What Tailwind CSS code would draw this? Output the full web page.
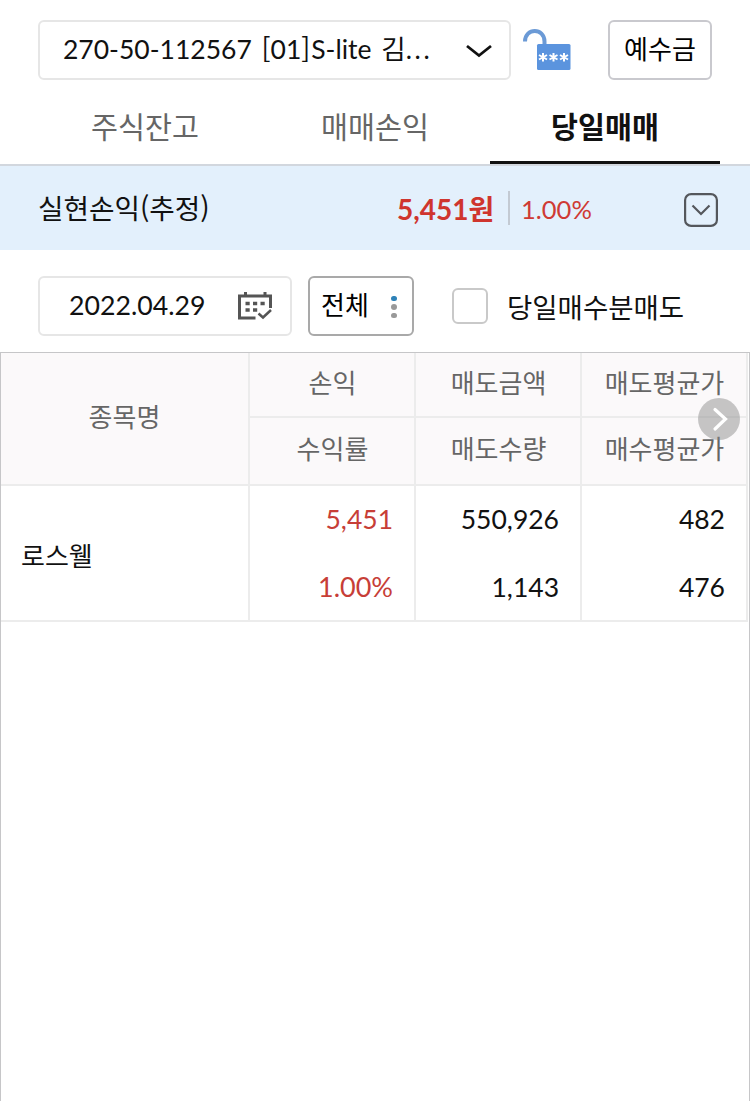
<!DOCTYPE html>
<html lang="ko">
<head>
<meta charset="utf-8">
<title>당일매매</title>
<script src="https://cdn.jsdelivr.net/npm/@tailwindcss/browser@4"></script>
</head>
<body class="flex h-[1101px] w-[750px] flex-col overflow-hidden bg-white font-['Lato','Noto_Sans_CJK_KR',sans-serif] text-[26px] leading-[40px] text-[#111] whitespace-nowrap">
  <header class="flex pt-5 pl-[38px] h-[94px]">
    <div class="flex h-15 w-[473px] items-center rounded-md border-2 border-[#e6e6e6] pl-[23px] pr-[16px]">
      <span class="flex-1 pb-[3px] text-[26.5px]">270-50-112567 <span class="ml-[3px] font-['Noto_Sans_CJK_KR']">[</span>01<span class="mr-px font-['Noto_Sans_CJK_KR']">]</span>S-lite <span class="ml-[3px]">김</span><span class="tracking-[2.6px]">...</span></span>
      <svg class="h-4 w-7" viewBox="0 0 28 16" fill="none" stroke="#111" stroke-width="2.8"><path d="M2 4 14 13.500 26 4"/></svg>
    </div>
    <svg class="ml-3 mt-2 h-[44px] w-[50px]" viewBox="0 0 50 44">
      <path d="M2 13.500C2 -.5 21.500 -.5 21.500 13.500V18" fill="none" stroke="#6b9ad6" stroke-width="4"/>
      <rect x="14" y="16" width="33.500" height="26" rx="1.500" fill="#5b94de"/>
      <g stroke="#fff" stroke-width="2"><path id="star" d="M20 25v8.500M16 27l8 4.500M24 27l-8 4.500"/><use href="#star" x="10.500"/><use href="#star" x="21"/></g>
    </svg>
    <div class="ml-[35px] flex h-15 w-[104px] items-center justify-center rounded-md border-2 border-[#c9c9ce] pb-0.5 text-black">예수금</div>
  </header>

  <nav class="grid h-[72px] grid-cols-3 border-b-2 border-[#d2d7de] px-[30px] text-center text-[29.3px] text-[#666]">
    <div class="pt-[13px]">주식잔고</div>
    <div class="pt-[13px]">매매손익</div>
    <div class="border-b-[3px] border-[#111] pt-[13px] font-bold text-[#111]">당일매매</div>
  </nav>

  <section class="flex h-[84px] items-center bg-[#e3f0fc] pl-[38px] pr-8">
    <span class="w-[359px] text-[27.700px]">실현손익<span class="font-['Noto_Sans_CJK_KR']">(</span>추정<span class="font-['Noto_Sans_CJK_KR']">)</span></span>
    <span class="w-[111px] pt-px text-[28px] font-bold text-[#cf352e]">5,451원</span>
    <span class="mr-[11px] h-[34px] w-0.5 bg-[#c3cad3]"></span>
    <span class="flex-1 pt-0.5 text-[25.500px] text-[#cf3a34]">1.00%</span>
    <svg class="mt-1 h-[34px] w-[34px]" viewBox="0 0 34 34" fill="none" stroke="#54575c" stroke-width="2.200"><rect x="1.100" y="1.100" width="31.800" height="31.800" rx="6"/><path d="m8.500 12.500 8.500 8.500 8.500-8.500"/></svg>
  </section>

  <section class="flex h-[102px] items-center pl-[38px] pt-[10px] pb-0">
    <div class="flex h-15 w-[254px] items-center rounded-md border-2 border-[#e6e6e6] pl-[29px] pr-[18px]">
      <span class="flex-1 pb-0.5 text-[26.700px]">2022.04.29</span>
      <svg class="h-[28px] w-[34px]" viewBox="0 0 34 28" fill="none" stroke="#555" stroke-width="3"><path d="M17.500 26H1.500V4h31v12M7.500 0v4M27 0v4"/><path d="m20.500 21.500 4.500 4 8-7.500" stroke-width="2.500"/><path d="M7.500 11.500h20M7.500 18h12" stroke-width="3.500" stroke-dasharray="4.200 3.300"/></svg>
    </div>
    <div class="ml-4 flex h-15 w-[106px] items-center justify-between rounded-md border-2 border-[#a9a9a9] pl-[11px] pr-[15px]">
      <span class="pb-0.5 text-black">전체</span>
      <span class="flex flex-col gap-[3px] pt-0.5"><i class="h-[5.500px] w-1.5 rounded-full bg-[#2e82b8]"></i><i class="h-[5.500px] w-1.5 rounded-full bg-[#999]"></i><i class="h-[5.500px] w-1.5 rounded-full bg-[#999]"></i></span>
    </div>
    <span class="ml-[38px] h-9 w-9 rounded-md border-2 border-[#c9c9c9]"></span>
    <span class="ml-[19px] pt-[3px] text-[27.500px]">당일매수분매도</span>
  </section>

  <main class="relative flex-1 border-x border-t border-[#c6c6c8]">
    <div class="grid w-[747px] grid-cols-[249px_166px_166px_166px] grid-rows-[65px_68px_68px_68px] text-right *:border-[#ececec]">
      <div class="row-span-2 flex items-center justify-center border-r-2 border-b-2 bg-[#fbf9fa] pb-[3px] text-[#666]">종목명</div>
      <div class="border-r-2 border-b-2 bg-[#fbf9fa] pt-[10px] pl-px text-center text-[#666]">손익</div>
      <div class="border-r-2 border-b-2 bg-[#fbf9fa] pt-[10px] pl-px text-center text-[#666]">매도금액</div>
      <div class="border-r-2 border-b-2 bg-[#fbf9fa] pt-[10px] pl-px text-center text-[#666]">매도평균가</div>
      <div class="border-r-2 border-b-2 bg-[#fbf9fa] pt-[11px] pl-px text-center text-[#666]">수익률</div>
      <div class="border-r-2 border-b-2 bg-[#fbf9fa] pt-[11px] pl-px text-center text-[#666]">매도수량</div>
      <div class="border-r-2 border-b-2 bg-[#fbf9fa] pt-[11px] pl-px text-center text-[#666]">매수평균가</div>
      <div class="row-span-2 flex items-center border-r-2 border-b-2 pl-5 pt-1.5">로스웰</div>
      <div class="border-r-2 pr-[21px] pt-[13px] text-[26.500px] text-[#c73e37]">5,451</div>
      <div class="border-r-2 pr-[21px] pt-[13px] text-[26.500px]">550,926</div>
      <div class="border-r-2 pr-[21px] pt-[13px] text-[26.500px]">482</div>
      <div class="border-r-2 border-b-2 pr-[21px] pt-[13px] text-[27px] text-[#c73e37]">1.00%</div>
      <div class="border-r-2 border-b-2 pr-[21px] pt-[13px] text-[26.500px]">1,143</div>
      <div class="border-r-2 border-b-2 pr-[21px] pt-[13px] text-[26.500px]">476</div>
    </div>
    <div class="absolute inset-y-0 left-[747px] hidden"></div>
    <svg class="absolute top-[45px] right-[9px] h-[42px] w-[42px]" viewBox="0 0 42 42"><circle cx="21" cy="21" r="21" fill="#888" fill-opacity=".47"/><path d="m17 11.500 10.500 9.500L17 31" fill="none" stroke="#fff" stroke-width="3.200" stroke-linecap="round"/></svg>
  </main>
</body>
</html>
